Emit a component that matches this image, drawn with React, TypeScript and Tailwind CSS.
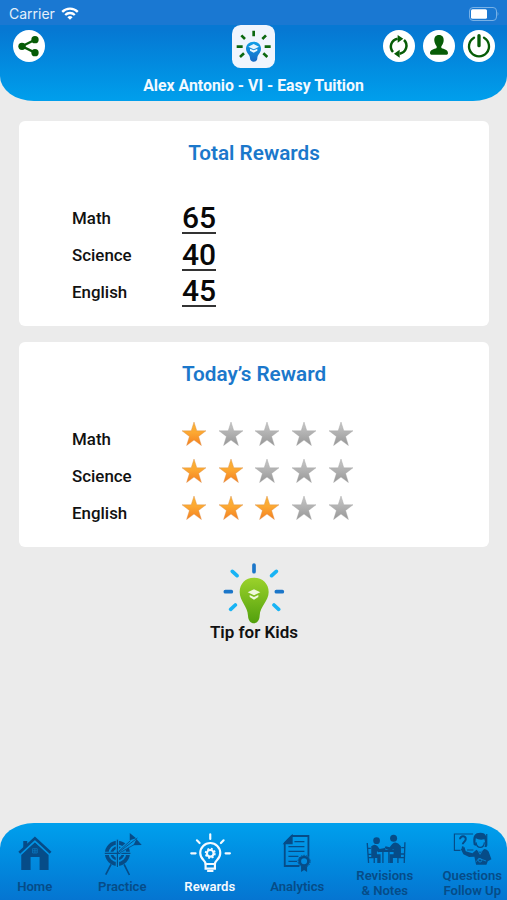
import * as React from "react"
import clsx from "clsx"

const totals = [
  { subject: "Math", points: 65 },
  { subject: "Science", points: 40 },
  { subject: "English", points: 45 },
]

const today = [
  { subject: "Math", stars: 1 },
  { subject: "Science", stars: 2 },
  { subject: "English", stars: 3 },
]

function StatusBar() {
  return (
    <div className="flex h-[25px] items-center justify-between bg-[#1a78d2] pt-0.5 pr-2 pl-[9px] text-[#e3effa]">
      <div className="flex items-center gap-1.5">
        <span className="pt-px font-['Inter',sans-serif] text-sm leading-4">Carrier</span>
        <svg width="18" height="13" viewBox="0 0 18 13" fill="none" stroke="#fff" strokeWidth="2.3">
          <path d="M1.2 4.9 A11 11 0 0 1 16.8 4.9" />
          <path d="M4.2 8 A6.8 6.8 0 0 1 13.8 8" />
          <path d="M9 12.8 L6.4 10.2 A3.7 3.7 0 0 1 11.6 10.2 Z" fill="#fff" stroke="none" />
        </svg>
      </div>
      <svg width="30" height="14" viewBox="1 0 30 14" fill="none">
        <rect x="1.5" y=".5" width="27" height="13" rx="3.5" stroke="#78b1e6" />
        <rect x="3" y="2.2" width="16" height="9.6" rx="1.5" fill="#fff" />
        <path d="M29.6 4.8 Q31.2 7 29.6 9.2 Z" fill="#78b1e6" />
      </svg>
    </div>
  )
}

function RoundButton({ label, children }: { label: string; children: React.ReactNode }) {
  return (
    <button
      type="button"
      aria-label={label}
      className="grid size-8 place-items-center rounded-full bg-white text-[#075c07]"
    >
      <svg width="32" height="32" viewBox="0 0 96 96" fill="none" stroke="currentColor">
        {children}
      </svg>
    </button>
  )
}

function AppLogo() {
  return (
    <svg width="43" height="43" viewBox="0 0 129 129" fill="none">
      <defs>
        <linearGradient id="logo-bulb" x1="0" y1="0" x2="0" y2="1">
          <stop offset="0" stopColor="#12a0e8" />
          <stop offset="1" stopColor="#1668c4" />
        </linearGradient>
      </defs>
      <rect width="129" height="129" rx="26" fill="#f0f5fd" />
      <g stroke="#0c680f" strokeWidth="8">
        <path d="M65 17 V34 M28 31 L39 42 M102 31 L91 42 M14 65 H32 M98 65 H116 M24 96 L36 85 M106 96 L94 85" />
      </g>
      <path
        d="M65 50 C51 50 42 59 42 71 C42 84 54 88 54 100 C54 114 76 114 76 100 C76 88 87 84 87 71 C87 59 78 50 65 50 Z"
        fill="url(#logo-bulb)"
      />
      <path d="M65 57 L81 65 L65 73 L49 65 Z M54 71 L65 76 L76 71 V77 L65 83 L54 77 Z" fill="#e8f5fd" />
    </svg>
  )
}

function Header() {
  return (
    <header className="h-[101px] shrink-0 overflow-hidden rounded-b-[34px_25px] bg-linear-to-b from-[#0678d3] from-30% to-[#009fec]">
      <StatusBar />
      <div className="grid grid-cols-3 px-3">
        <div className="pt-[5px] pl-px">
          <RoundButton label="Share">
            <path d="M66 29 L27 49 L66 68" strokeWidth="7" />
            <g fill="currentColor" stroke="none">
              <circle cx="66" cy="29" r="11" />
              <circle cx="27" cy="49" r="11" />
              <circle cx="66" cy="68" r="11" />
            </g>
          </RoundButton>
        </div>
        <div className="flex justify-center">
          <AppLogo />
        </div>
        <div className="flex justify-end gap-2 pt-[5px]">
          <RoundButton label="Refresh">
            <path d="M30 66 A24 24 0 0 1 44 26 M63 30 A24 24 0 0 1 50 71" strokeWidth="7.5" />
            <path d="M44 15 L61 26 L44 38 Z M50 59 L33 71 L50 83 Z" fill="currentColor" stroke="none" />
          </RoundButton>
          <RoundButton label="Profile">
            <path
              d="M48 15 C38 15 33 22 34 33 C35 41 39 46 41 49 V54 C33 58 21 58 21 70 Q21 74 25 74 H71 Q75 74 75 70 C75 58 63 58 55 54 V49 C57 46 61 41 62 33 C63 22 58 15 48 15 Z"
              fill="currentColor"
              stroke="none"
            />
          </RoundButton>
          <RoundButton label="Log out">
            <path d="M33 23 A30 30 0 1 0 63 23" strokeWidth="7" strokeLinecap="round" />
            <path d="M48 17 V47" strokeWidth="10" strokeLinecap="round" />
          </RoundButton>
        </div>
      </div>
      <h1 className="mt-2 text-center text-[15.85px] leading-5 font-bold text-[#f2f9ff]">
        Alex Antonio - VI - Easy Tuition
      </h1>
    </header>
  )
}

function Card({ title, children }: { title: string; children: React.ReactNode }) {
  return (
    <section className="h-[205px] rounded-md bg-white pt-5">
      <h2 className="text-center text-[20.7px] leading-6 font-semibold text-[#1b78cb]">{title}</h2>
      {children}
    </section>
  )
}

function Star({ filled }: { filled: boolean }) {
  return (
    <svg width="24" height="24" viewBox="0 0 24 24">
      <path
        d="M12 0 L14.8 8.8 L24 8.8 L16.6 14.4 L19.4 23.5 L12 18.1 L4.6 23.5 L7.4 14.4 L0 8.8 L9.2 8.8 Z"
        fill={filled ? "url(#star-on)" : "url(#star-off)"}
        stroke={filled ? "#d9914c" : "#a5a5a5"}
        strokeWidth=".4"
      />
    </svg>
  )
}

function StarGradients() {
  return (
    <svg width="0" height="0" className="absolute">
      <defs>
        <linearGradient id="star-on" x1="0" y1="0" x2="0" y2="1">
          <stop offset="0" stopColor="#fbb436" />
          <stop offset=".45" stopColor="#fca832" />
          <stop offset="1" stopColor="#f47f20" />
        </linearGradient>
        <linearGradient id="star-off" x1="0" y1="0" x2="0" y2="1">
          <stop offset="0" stopColor="#c9c9c9" />
          <stop offset="1" stopColor="#979797" />
        </linearGradient>
      </defs>
    </svg>
  )
}

function TipForKids() {
  return (
    <button type="button" className="mx-auto mt-4 flex flex-col items-center">
      <svg width="62" height="61" viewBox="0 0 186 183" fill="none" strokeLinecap="round">
        <defs>
          <linearGradient id="tip-bulb" x1="0" y1="0" x2="0" y2="1">
            <stop offset="0" stopColor="#9bd22b" />
            <stop offset="1" stopColor="#52a00d" />
          </linearGradient>
        </defs>
        <g strokeWidth="11">
          <path d="M93 6 V26 M7 86 H25 M160 86 H178" stroke="#1b76c9" />
          <path d="M28 25 L42 38 M160 25 L146 38 M23 139 L37 126 M167 139 L153 126" stroke="#18b3f4" />
        </g>
        <path
          d="M93 44 C67 44 50 62 50 87 C50 115 74 129 75 158 C76 188 109 188 110 158 C111 129 137 115 137 87 C137 62 119 44 93 44 Z"
          fill="url(#tip-bulb)"
        />
        <path d="M93 79 L112 88 L93 97 L74 88 Z M80 96 L93 102 L106 96 V102 L93 110 L80 102 Z" fill="#eef8dc" />
      </svg>
      <span className="-mt-0.5 text-[17px] leading-5 font-semibold text-[#111]">Tip for Kids</span>
    </button>
  )
}

function HomeIcon() {
  return (
    <g>
      <path d="M63 120 L104 82 L145 120 V165 H118 V126 H91 V165 H63 Z" fill="currentColor" />
      <path d="M69 78 H81 V89 L69 100 Z" fill="currentColor" />
      <path d="M57 113 L104 70 L151 113" fill="none" stroke="currentColor" strokeWidth="8" />
      <path d="M64 116 L104 80 L144 116" fill="none" stroke="#0596e2" strokeWidth="2" />
      <path d="M97 101 H111 V114 H97 Z M104 101 V114 M97 107.5 H111" fill="none" stroke="#0b80cc" strokeWidth="2" />
    </g>
  )
}

function PracticeIcon() {
  return (
    <g fill="none" stroke="currentColor">
      <circle cx="353" cy="115" r="32" strokeWidth="11" />
      <circle cx="353" cy="115" r="17" strokeWidth="8" />
      <path d="M353 72 V158 M310 115 H396" stroke="#058fde" strokeWidth="10" />
      <path d="M353 74 V156 M315 115 H392" strokeWidth="3.5" />
      <path d="M334 148 L318 179 M373 148 L389 180" strokeWidth="5" />
      <path d="M358 111 L385 89" stroke="#058fde" strokeWidth="16" />
      <path d="M355 113 L413 69 M357 109 L392 77 M361 113 L403 89" strokeWidth="2.5" />
      <path d="M390 54 L409 70 L390 76 Z M401 91 L410 72 L426 90 Z" fill="currentColor" stroke="none" />
    </g>
  )
}

function RewardsIcon() {
  return (
    <g fill="none" stroke="currentColor" strokeWidth="6.5" strokeLinecap="round">
      <path d="M120 58 V72 M80 76 L88 84 M160 76 L152 84 M63 115 H76 M166 115 H179" />
      <path d="M106 147 C106 135 90 134 90 114 A30 30 0 0 1 150 114 C150 134 134 135 134 147 Z" strokeLinejoin="round" />
      <path d="M106 147 V161 H134 V147 M113 168 H127" />
      <circle cx="120" cy="115" r="10" />
      <circle cx="120" cy="115" r="14" strokeDasharray="6 5" strokeWidth="5" strokeLinecap="butt" />
    </g>
  )
}

function AnalyticsIcon() {
  return (
    <g fill="none" stroke="currentColor" strokeWidth="5.5">
      <path d="M389 153 H345 V84 L366 63 H416 V125" />
      <path d="M345 85 L366 63 V85 Z" fill="currentColor" />
      <path d="M374 80 H404 M356 95 H404 M356 109 H404 M356 124 H386 M356 139 H382" strokeWidth="4" />
      <circle cx="403" cy="139" r="13" strokeWidth="8" />
      <circle cx="403" cy="139" r="18" strokeWidth="3" strokeDasharray="5 3" />
      <path d="M394 154 H412 V171 L403 165 L394 171 Z" fill="currentColor" stroke="none" />
    </g>
  )
}

function RevisionsIcon() {
  return (
    <g fill="currentColor">
      <circle cx="118" cy="77" r="10" />
      <circle cx="169" cy="70" r="10.5" />
      <path d="M102 94 Q113 85 121 94 L127 102 L143 99 L145 106 L124 112 L119 109 V118 H130 V144 H120 V129 H102 Z" />
      <path d="M191 94 Q178 76 165 87 L157 97 L145 94 L142 100 L160 107 L169 102 V118 H157 V144 H167 V129 H191 Z" />
      <path
        d="M90 84 L94 144 M90 100 H101 M92 118 H103 M92 128 H112 M111 128 V144 M203 82 L201 144 M203 98 H192 M202 117 H190 M202 128 H181 M182 128 V144 M137 108 V144 M155 108 V144"
        fill="none"
        stroke="currentColor"
        strokeWidth="4"
      />
      <path d="M124 104 H172 V111 H124 Z" />
    </g>
  )
}

function QuestionsIcon() {
  return (
    <g fill="none" stroke="currentColor" strokeWidth="3.5">
      <path d="M409 57 H353 V106 H371 M450 57 V92 M391 105 H410" />
      <path d="M370 73 C370 60 388 61 387 73 C387 80 378 80 378 88" strokeWidth="6" />
      <circle cx="378" cy="97" r="3" fill="currentColor" stroke="none" />
      <path
        d="M411 90 C406 62 414 53 431 53 C449 53 453 66 450 96 H443 C447 90 445 80 443 73 Q427 76 417 70 Q414 83 419 93 Z"
        fill="currentColor"
        stroke="none"
      />
      <path d="M418 82 C420 102 441 102 443 82" />
      <path
        d="M372 102 L383 96 L387 109 L407 115 L419 104 L430 111 L443 102 Q455 104 458 116 L464 133 L453 139 L449 149 H418 L413 125 L397 126 L380 118 Z"
        fill="currentColor"
        stroke="none"
      />
      <path d="M422 104 L430 118 L438 104 M419 140 L426 130 L448 138" stroke="#0789d9" strokeWidth="2.5" />
      <circle cx="430" cy="136" r="5" stroke="#0789d9" strokeWidth="2.5" />
    </g>
  )
}

const tabs = [
  { lines: ["Home"], Icon: HomeIcon, viewBox: "14.25 48 180 141" },
  { lines: ["Practice"], Icon: PracticeIcon, viewBox: "276.75 48 180 141" },
  { lines: ["Rewards"], Icon: RewardsIcon, viewBox: "29.25 48 180 141", active: true },
  { lines: ["Analytics"], Icon: AnalyticsIcon, viewBox: "291.75 48 180 141" },
  { lines: ["Revisions", "& Notes"], Icon: RevisionsIcon, viewBox: "53.25 48 180 108" },
  { lines: ["Questions", "Follow Up"], Icon: QuestionsIcon, viewBox: "315.75 48 180 108" },
]

function TabBar() {
  return (
    <nav className="flex h-[77px] shrink-0 justify-center overflow-hidden rounded-t-[34px_25px] bg-linear-to-b from-[#00a0ed] to-[#0575d1]">
      {tabs.map(({ lines, Icon, viewBox, active }) => (
        <button
          key={lines[0]}
          type="button"
          className={clsx(
            "flex w-[87.5px] shrink-0 flex-col items-center justify-start pt-2",
            active ? "text-[#f4faff]" : "text-[#064c88]",
          )}
        >
          <svg
            viewBox={viewBox}
            className={clsx("mb-px w-[60px] shrink-0", lines.length > 1 ? "h-9" : "h-[47px]")}
          >
            <Icon />
          </svg>
          {lines.map((line) => (
            <span key={line} className="text-[13.1px] leading-[15px] font-semibold whitespace-nowrap">
              {line}
            </span>
          ))}
        </button>
      ))}
    </nav>
  )
}

export default function App() {
  return (
    <div className="flex h-[900px] w-full flex-col overflow-hidden bg-[#ebebeb] font-['Roboto',sans-serif]">
      <StarGradients />
      <Header />
      <main className="flex flex-1 flex-col gap-4 pt-5 pr-[18px] pl-[19px]">
        <Card title="Total Rewards">
          <ul className="mt-[35px] pl-[53px]">
            {totals.map(({ subject, points }) => (
              <li key={subject} className="flex h-[36.7px] items-center">
                <span className="w-[110px] pt-px text-[16.9px] font-medium text-[#111]">{subject}</span>
                <span className="border-b-2 border-[#333] text-[30px] leading-[29px] font-medium text-[#080808]">
                  {points}
                </span>
              </li>
            ))}
          </ul>
        </Card>
        <Card title="Today’s Reward">
          <ul className="mt-[30px] pl-[53px]">
            {today.map(({ subject, stars }) => (
              <li key={subject} className="flex h-[36.7px] items-center">
                <span className="w-[110px] pt-[11px] text-[16.9px] font-medium text-[#111]">{subject}</span>
                <span className="flex gap-[12.7px]">
                  {[1, 2, 3, 4, 5].map((n) => (
                    <Star key={n} filled={n <= stars} />
                  ))}
                </span>
              </li>
            ))}
          </ul>
        </Card>
        <div className="-mt-4 flex">
          <TipForKids />
        </div>
      </main>
      <TabBar />
    </div>
  )
}
